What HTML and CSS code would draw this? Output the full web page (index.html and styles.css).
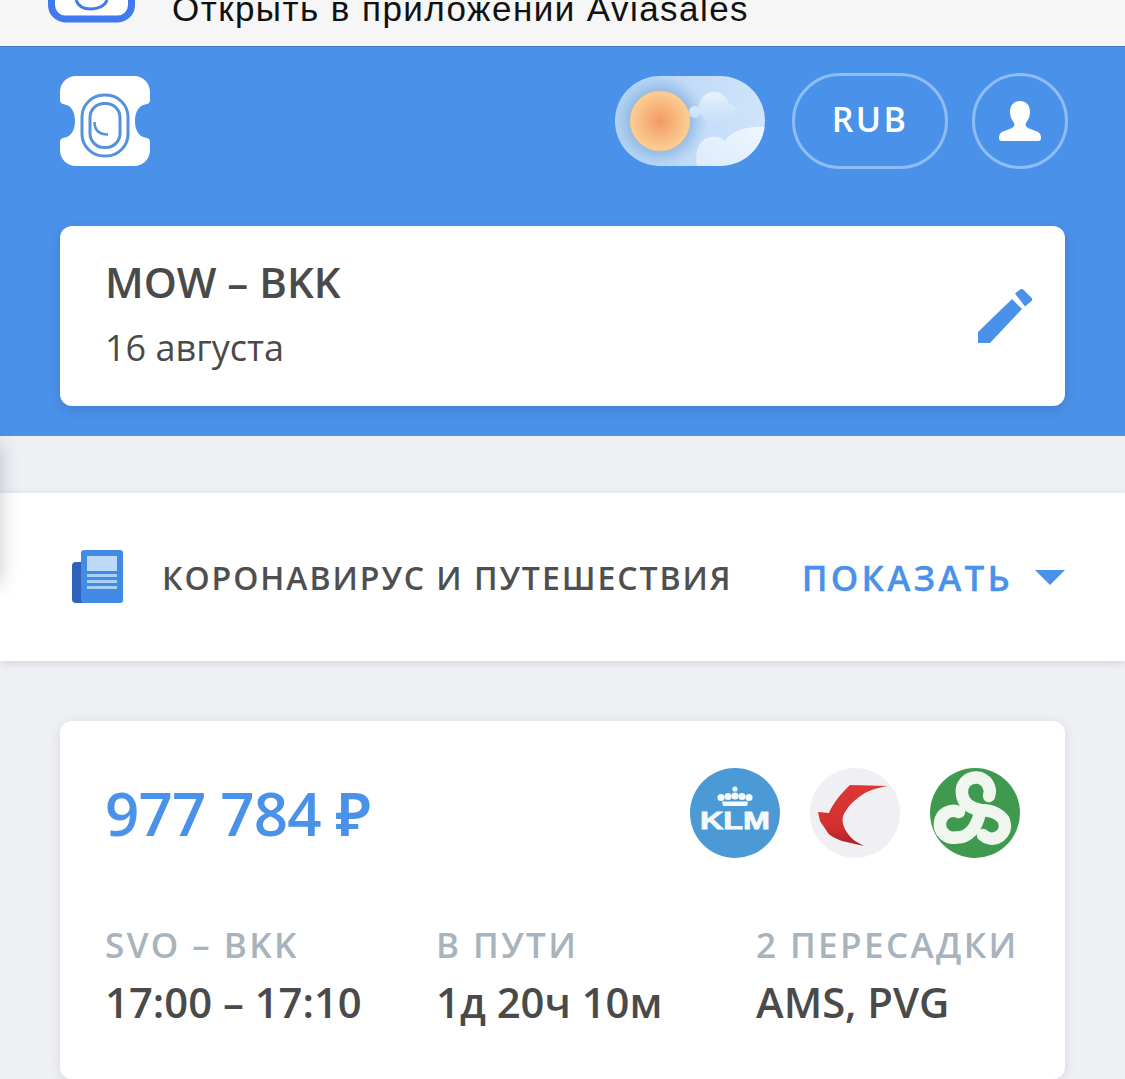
FILE: index.html
```html
<!DOCTYPE html>
<html lang="ru">
<head>
<meta charset="utf-8">
<title>Aviasales</title>
<link rel="stylesheet" href="styles.css">
</head>
<body>
<div class="page">
  <div class="smart-bar">
    <div class="app-icon">
      <svg width="87" height="50" viewBox="0 0 87 50"><rect x="3.500" y="-30" width="80" height="49" rx="14" fill="#fff" stroke="#4179ee" stroke-width="7"/><path d="M28 0c2 6 8 9 15 9s14-3 16-9" fill="none" stroke="#4179ee" stroke-width="3"/></svg>
    </div>
    <span class="smart-text">Открыть в приложении Aviasales</span>
  </div>
  <header class="hero">
    <div class="topline">
      <svg class="logo" width="90" height="90" viewBox="0 0 90 90">
        <path d="M16 0H74C83 0 90 7 90 16V24C90 27 88 28 85 28.500C78 30 75 37 75 45S78 60 85 61.500C88 62 90 63 90 66V74C90 83 83 90 74 90H16C7 90 0 83 0 74V66C0 63 2 62 5 61.500C12 60 15 53 15 45S12 30 5 28.500C2 28 0 27 0 24V16C0 7 7 0 16 0Z" fill="#fff"/>
        <rect x="22" y="19" width="46" height="61" rx="22" fill="none" stroke="#5592dd" stroke-width="3"/>
        <rect x="30" y="27.500" width="30" height="44" rx="14" fill="none" stroke="#5592dd" stroke-width="3"/>
        <path d="M34.500 46c0 8 4 12.500 13.500 12.500" fill="none" stroke="#5592dd" stroke-width="2.600"/>
      </svg>
      <div class="controls">
        <div class="theme-toggle">
          <svg class="toggle-art" width="150" height="90" viewBox="0 0 150 90">
            <defs>
              <linearGradient id="sky" x1="0" x2="1" y1="0" y2="0"><stop offset="0" stop-color="#b5d4f5"/><stop offset="1" stop-color="#cfe4fa"/></linearGradient>
              <radialGradient id="sun"><stop offset="0" stop-color="#f29a62"/><stop offset="1" stop-color="#fbcf95"/></radialGradient>
              <radialGradient id="halo"><stop offset=".6" stop-color="#7fa9d8" stop-opacity=".7"/><stop offset="1" stop-color="#9cc3ee" stop-opacity="0"/></radialGradient>
              <linearGradient id="cloud-a" gradientUnits="userSpaceOnUse" x1="0" x2="0" y1="16" y2="40"><stop offset="0" stop-color="#e8f2fd"/><stop offset="1" stop-color="#cbe1f9"/></linearGradient>
              <linearGradient id="cloud-b" x1="0" x2="1" y1="1" y2="0"><stop offset="0" stop-color="#dcebfb"/><stop offset="1" stop-color="#eef6fe"/></linearGradient>
              <clipPath id="pill"><rect width="150" height="90" rx="45"/></clipPath>
            </defs>
            <g clip-path="url(#pill)">
              <rect width="150" height="90" fill="url(#sky)"/>
              <circle cx="45" cy="45" r="48" fill="url(#halo)"/>
              <g fill="url(#cloud-a)"><circle cx="99" cy="31" r="15"/><circle cx="113" cy="36" r="9"/><circle cx="80" cy="36" r="6"/></g>
              <path d="M82 90c-3-14 2-28 14-29 8-1 11 2 14 4 6-10 22-15 40-14v39z" fill="url(#cloud-b)"/>
              <circle cx="45" cy="45" r="30" fill="url(#sun)" stroke="#e8c58e" stroke-width=".8"/>
            </g>
          </svg>
        </div>
        <button class="pill-btn currency">RUB</button>
        <button class="pill-btn profile" aria-label="Профиль">
          <svg width="44" height="44" viewBox="0 0 44 44"><path d="M22 2c7 0 10 5 10 11 0 5-2 8-4 11-1 2 0 4 2 5l10 4c2 1 3 3 3 6 0 2-1 3-3 3H4c-2 0-3-1-3-3 0-3 1-5 3-6l10-4c2-1 3-3 2-5-2-3-4-6-4-11 0-6 3-11 10-11z" fill="#fff"/></svg>
        </button>
      </div>
    </div>
    <div class="search-card">
      <div class="search-text">
        <div class="route">MOW – BKK</div>
        <div class="date">16 августа</div>
      </div>
      <svg class="edit" width="56" height="56" viewBox="0 0 56 56"><path d="M1 44V55H13L45 21 35 11z" fill="#4a92e9"/><path d="M38 5.500L43 1.500C44 .8 45.500 .8 46.500 1.800L54.500 9.800C55.500 10.800 55.500 12 54.500 13L48 18.500z" fill="#4a92e9"/></svg>
    </div>
  </header>
  <main class="content">
    <div class="edge-shadow"></div>
    <section class="notice">
      <svg class="news" width="52" height="55" viewBox="0 0 52 55"><rect x="0" y="13" width="14" height="41" rx="4" fill="#2f62bb"/><rect x="9" y="1" width="42" height="53" rx="3" fill="#4389e6"/><rect x="15" y="7" width="30" height="15" fill="#bdd9f8"/><rect x="15" y="25" width="30" height="3" fill="#a9d0f7"/><rect x="15" y="31" width="30" height="3" fill="#a9d0f7"/><rect x="15" y="37" width="30" height="3" fill="#a9d0f7"/></svg>
      <span class="notice-title">КОРОНАВИРУС И ПУТЕШЕСТВИЯ</span>
      <span class="notice-show">ПОКАЗАТЬ</span>
      <span class="caret"></span>
    </section>
    <article class="ticket">
      <div class="ticket-head">
        <div class="price">977 784 ₽</div>
        <div class="carriers">
          <div class="carrier klm">
            <svg width="90" height="90" viewBox="0 0 90 90">
              <circle cx="45" cy="45" r="45" fill="#4b9ad6"/>
              <g fill="#f3f9fd"><circle cx="45" cy="21" r="2.600"/><circle cx="31" cy="29.500" r="3.600"/><circle cx="38" cy="28.500" r="3.600"/><circle cx="45" cy="28" r="3.600"/><circle cx="52" cy="28.500" r="3.600"/><circle cx="59" cy="29.500" r="3.600"/><path d="M32 33.500H58L57 38H33z"/></g>
              <text class="klm-word" x="45" y="60.500" text-anchor="middle" textLength="70" lengthAdjust="spacingAndGlyphs">KLM</text>
            </svg>
          </div>
          <div class="carrier eastern">
            <svg width="90" height="90" viewBox="0 0 90 90">
              <circle cx="45" cy="45" r="45" fill="#f0f0f4"/>
              <defs><linearGradient id="red" x1="0" x2="0" y1="0" y2="1"><stop offset="0" stop-color="#dc3733"/><stop offset=".7" stop-color="#d2302f"/><stop offset="1" stop-color="#a82026"/></linearGradient></defs>
              <path d="M40 17L78 18C66 20 57 23 52 27 44 32 37 39 33 48 31 56 36 66 45 73L54 78 32 73C25 70 20 68 18 65L10 53 8 44 19 45C22 37 31 25 40 17z" fill="url(#red)"/>
            </svg>
          </div>
          <div class="carrier green">
            <svg width="90" height="90" viewBox="0 0 90 90">
              <circle cx="45" cy="45" r="45" fill="#3f9a50"/>
              <g fill="none" stroke="#eef6ee" stroke-width="12.500" stroke-linecap="round">
                <path d="M59 28A14 14 0 1 0 32 26C33 35 40 40 50 42 60 42 75 46 75 58A13 13 0 0 1 53 67"/>
                <path d="M29 44A13.500 13.500 0 1 0 26 69.500C38 70 47 60 50 44"/>
              </g>
            </svg>
          </div>
        </div>
      </div>
      <div class="ticket-info">
        <div class="info-col col-times">
          <div class="info-label">SVO – BKK</div>
          <div class="info-value">17:00 – 17:10</div>
        </div>
        <div class="info-col col-duration">
          <div class="info-label">В ПУТИ</div>
          <div class="info-value">1д 20ч 10м</div>
        </div>
        <div class="info-col">
          <div class="info-label">2 ПЕРЕСАДКИ</div>
          <div class="info-value">AMS, PVG</div>
        </div>
      </div>
    </article>
  </main>
</div>
</body>
</html>
```
FILE: styles.css
```css
* { box-sizing: border-box; }
html, body { margin: 0; padding: 0; height: 1079px; overflow: hidden; }
body { font-family: "Open Sans", "Noto Sans", sans-serif; background: #eef0f4; color: #4a4a4a; }
.page { height: 1079px; overflow: hidden; }

.smart-bar { height: 47px; background: #f6f6f6; border-bottom: 1px solid #3f78bd; overflow: hidden; position: relative; }
.app-icon { position: absolute; left: 48px; top: 0; height: 23px; width: 87px; overflow: hidden; }
.app-icon svg { display: block; }
.smart-text { position: absolute; left: 172px; top: -11px; font-family: "Liberation Sans", Arial, sans-serif; font-size: 35px; line-height: 40px; letter-spacing: 1.45px; color: #111; white-space: nowrap; }

.hero { height: 389px; background: #4a92e9; padding: 29px 60px 30px; display: flex; flex-direction: column; }
.topline { display: flex; justify-content: space-between; align-items: flex-start; height: 150px; }
.logo { display: block; }
.controls { display: flex; align-items: center; margin-right: -3px; margin-top: -3px; }
.theme-toggle { width: 150px; height: 90px; margin-right: 27px; }
.toggle-art { display: block; }
.pill-btn { height: 96px; border: 3px solid #8dbdf4; background: transparent; border-radius: 48px; color: #fff; font-family: inherit; display: flex; align-items: center; justify-content: center; padding: 0; }
.currency { width: 156px; font-size: 34px; letter-spacing: 2.3px; font-weight: 600; margin-right: 24px; padding-bottom: 4px; }
.profile { width: 96px; }
.profile svg { display: block; }

.search-card { height: 180px; background: #fff; border-radius: 12px; box-shadow: 0 4px 12px rgba(30, 70, 130, .22); display: flex; align-items: center; justify-content: space-between; padding: 0 32px 0 45px; }
.route { font-size: 42px; line-height: 54px; font-weight: 600; color: #4a4a4a; margin-bottom: 17px; margin-top: -8px; }
.date { font-size: 36px; line-height: 44px; color: #4a4a4a; }
.edit { display: block; }

.content { position: relative; padding-top: 57px; }
.edge-shadow { position: absolute; z-index: 1; left: -14px; top: 8px; width: 14px; height: 140px; box-shadow: 0 0 18px rgba(60, 70, 90, .32); }
.notice { position: relative; height: 168px; background: #fff; box-shadow: 0 2px 8px rgba(40, 50, 70, .14); display: flex; align-items: center; padding: 0 60px 0 72px; }
.news { display: block; margin-right: 38px; margin-top: -2px; }
.notice-title { font-size: 32px; font-weight: 600; letter-spacing: 1.95px; color: #4f4f4f; flex: 1; white-space: nowrap; }
.notice-show { font-size: 35px; font-weight: 600; letter-spacing: 3.2px; color: #4a92e9; margin-right: 22px; white-space: nowrap; -webkit-text-stroke: .3px #4a92e9; }
.caret { width: 0; height: 0; border-left: 15px solid transparent; border-right: 15px solid transparent; border-top: 15px solid #4a92e9; }

.ticket { margin: 60px 60px 0; height: 358px; background: #fff; border-radius: 12px; box-shadow: 0 2px 12px rgba(40, 50, 70, .12); padding: 47px 45px 0; }
.ticket-head { display: flex; justify-content: space-between; align-items: center; height: 90px; }
.price { font-size: 60px; line-height: 90px; font-weight: 600; color: #4a92e9; letter-spacing: -.8px; white-space: nowrap; }
.carriers { display: flex; gap: 30px; }
.carrier { width: 90px; height: 90px; }
.carrier svg { display: block; }
.klm-word { font-family: "Liberation Sans", Arial, sans-serif; font-weight: 700; font-size: 24px; fill: #f3f9fd; stroke: #f3f9fd; stroke-width: .8px; }
.ticket-info { display: flex; margin-top: 65px; }
.info-col { white-space: nowrap; }
.col-times { width: 331px; }
.col-duration { width: 320px; }
.info-label { font-size: 35px; line-height: 44px; font-weight: 600; letter-spacing: 2.4px; color: #a7b3bd; }
.info-value { font-size: 41.800px; line-height: 54px; font-weight: 600; color: #4a4a4a; margin-top: 8px; }
```
